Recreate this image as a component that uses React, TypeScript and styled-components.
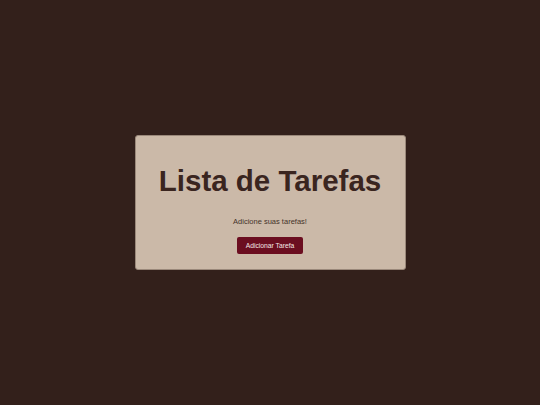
import React from "react";
import styled, { createGlobalStyle } from "styled-components";

const GlobalStyle = createGlobalStyle`
  html, body {
    margin: 0;
    padding: 0;
    height: 100%;
    background: #33201b;
    font-family: "Liberation Sans", Arial, sans-serif;
  }
  #root {
    height: 100%;
  }
`;

const Page = styled.main`
  height: 100%;
  display: flex;
  align-items: center;
  justify-content: center;
`;

const Card = styled.section`
  width: 271px;
  height: 135px;
  box-sizing: border-box;
  background: #cbb9a8;
  border: 1px solid #9a887a;
  border-radius: 3px;
  display: flex;
  flex-direction: column;
  align-items: center;
  padding-top: 27px;
`;

const Title = styled.h1`
  margin: 0;
  font-size: 29.5px;
  font-weight: 700;
  color: #3a251f;
  line-height: 36px;
`;

const Subtitle = styled.p`
  margin: 18px 0 0;
  font-size: 7.5px;
  color: #45332a;
  line-height: 10px;
`;

const AddButton = styled.button`
  margin-top: 10px;
  height: 17px;
  padding: 0 8.5px;
  border: none;
  border-radius: 2px;
  background: #6b0e20;
  color: #f3e6e6;
  font-family: "Liberation Sans", Arial, sans-serif;
  font-size: 6.75px;
  cursor: pointer;
`;

export default function App() {
  return (
    <>
      <GlobalStyle />
      <Page>
        <Card>
          <Title>Lista de Tarefas</Title>
          <Subtitle>Adicione suas tarefas!</Subtitle>
          <AddButton>Adicionar Tarefa</AddButton>
        </Card>
      </Page>
    </>
  );
}
